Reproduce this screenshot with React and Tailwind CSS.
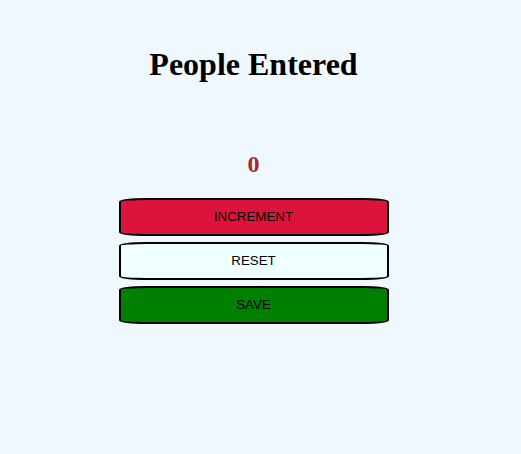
import React, { useState } from "react";

export default function App() {
  const [count, setCount] = useState(0);

  const btn =
    "w-[270px] h-[38px] border-2 border-black rounded-[10%] text-[13.33px] text-black font-['Liberation_Sans',Arial,sans-serif] cursor-pointer";

  return (
    <div className="min-h-[454px] w-full bg-[#f0f8ff]">
      <div className="w-[507px] flex flex-col items-center">
        <h1 className="mt-[46px] text-[32px] font-bold text-black font-['Liberation_Serif','Times_New_Roman',serif] leading-[normal]">
          People Entered
        </h1>
        <h2 className="mt-[68px] text-[24px] font-bold text-[#a52a2a] font-['Liberation_Serif','Times_New_Roman',serif] leading-[normal]">
          {count}
        </h2>
        <div className="mt-[20px] flex flex-col gap-[6px]">
          <button onClick={() => setCount(count + 1)} className={`${btn} bg-[#dc143c]`}>
            INCREMENT
          </button>
          <button onClick={() => setCount(0)} className={`${btn} bg-[#f0ffff]`}>
            RESET
          </button>
          <button className={`${btn} bg-[#008000]`}>SAVE</button>
        </div>
      </div>
    </div>
  );
}
